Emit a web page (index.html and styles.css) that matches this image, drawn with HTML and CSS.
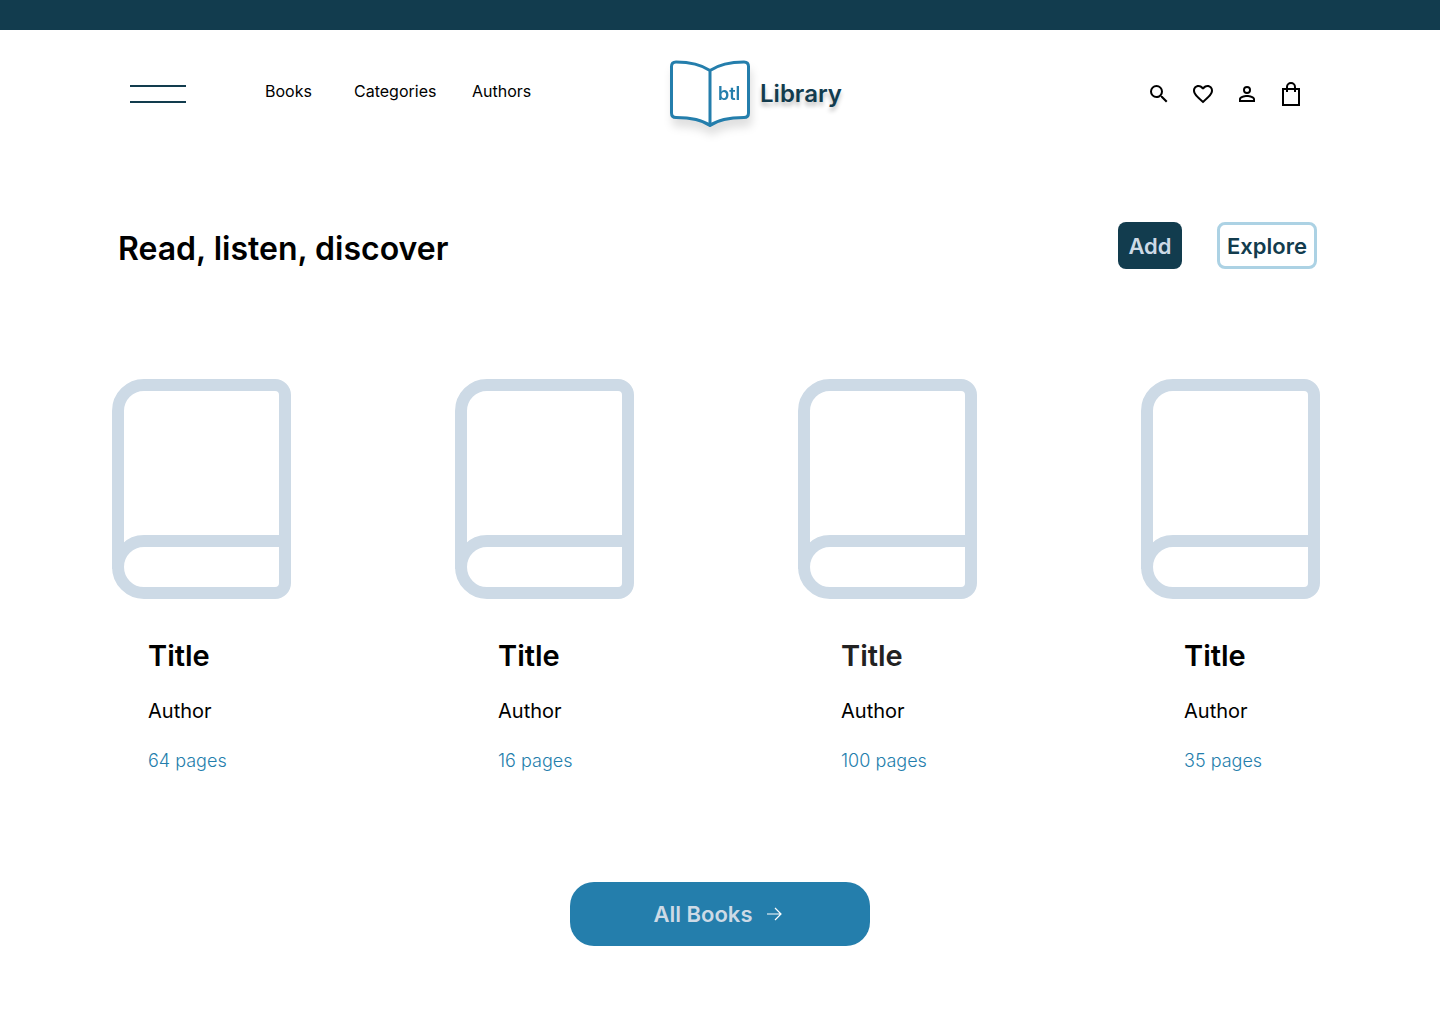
FILE: index.html
```html
<!DOCTYPE html>
<html lang="en">
<head>
  <meta charset="utf-8">
  <meta name="viewport" content="width=device-width, initial-scale=1">
  <title>btl Library</title>
  <link rel="stylesheet" href="styles.css">
</head>
<body>
  <svg class="defs" width="0" height="0" aria-hidden="true">
    <symbol id="book" viewBox="0 0 179 220">
      <path d="M32 162H173M6 188V32A26 26 0 0 1 32 6H163A10 10 0 0 1 173 16V204A10 10 0 0 1 163 214H32A26 26 0 0 1 32 162" fill="none" stroke="currentColor" stroke-width="12"/>
      <path d="M6 184V190" fill="none" stroke="currentColor" stroke-width="12"/>
    </symbol>
  </svg>
  <div class="topbar"></div>
  <header class="header">
    <div class="header-left">
      <button class="menu" type="button" aria-label="Menu"><span></span><span></span></button>
      <nav class="nav">
        <a href="#books">Books</a>
        <a href="#categories">Categories</a>
        <a href="#authors">Authors</a>
      </nav>
    </div>
    <a class="logo" href="#home">
      <svg class="logo-mark" viewBox="0 0 80 68" width="80" height="68">
        <path d="M40 10.500C31 4.500 19 2 6 2Q1.500 2 1.500 6.500V53Q1.500 57.500 6 57.500C20 57.500 31 59 40 65.500C49 59 60 57.500 74 57.500Q78.500 57.500 78.500 53V6.500Q78.500 2 74 2C61 2 49 4.500 40 10.500ZM40 10.500V65.500" fill="#fff" stroke="currentColor" stroke-width="3" stroke-linejoin="round"/>
        <text class="logo-initials" x="48" y="40">btl</text>
      </svg>
      <span class="logo-name">Library</span>
    </a>
    <div class="tools">
      <button type="button" aria-label="Search"><svg viewBox="0 0 24 24"><path d="M15.500 14h-.79l-.28-.27A6.470 6.470 0 0 0 16 9.500 6.500 6.500 0 1 0 9.500 16c1.610 0 3.090-.59 4.230-1.570l.27.28v.79l5 4.990L20.490 19zM9.500 14a4.500 4.500 0 1 1 0-9 4.500 4.500 0 0 1 0 9"/></svg></button>
      <button type="button" aria-label="Favourites"><svg viewBox="0 0 24 24"><path d="M16.500 3c-1.740 0-3.410.81-4.500 2.090C10.910 3.810 9.240 3 7.500 3 4.420 3 2 5.420 2 8.500c0 3.780 3.400 6.860 8.550 11.540L12 21.350l1.450-1.320C18.600 15.360 22 12.280 22 8.500 22 5.420 19.580 3 16.500 3m-4.400 15.550-.1.1-.1-.1C7.140 14.240 4 11.390 4 8.500 4 6.500 5.500 5 7.500 5c1.540 0 3.040.99 3.570 2.360h1.870C13.460 5.990 14.960 5 16.500 5c2 0 3.500 1.500 3.500 3.500 0 2.890-3.140 5.740-7.900 10.050"/></svg></button>
      <button type="button" aria-label="Account"><svg viewBox="0 0 24 24"><path d="M12 5.900a2.100 2.100 0 1 1 0 4.200 2.100 2.100 0 0 1 0-4.200m0 9c2.970 0 6.100 1.460 6.100 2.100v1.100H5.900V17c0-.64 3.130-2.100 6.100-2.100M12 4a4 4 0 1 0 0 8 4 4 0 0 0 0-8m0 9c-2.670 0-8 1.340-8 4v3h16v-3c0-2.660-5.330-4-8-4"/></svg></button>
      <button type="button" aria-label="Bag"><svg viewBox="0 0 24 24"><path d="M4 7H20V23H4ZM8 10V5A4 4 0 0 1 16 5V10" fill="none" stroke="currentColor" stroke-width="2"/></svg></button>
    </div>
  </header>
  <main>
    <section class="intro">
      <h1>Read, listen, discover</h1>
      <div class="actions">
        <button class="btn btn-solid" type="button">Add</button>
        <button class="btn btn-outline" type="button">Explore</button>
      </div>
    </section>
    <section class="books">
      <article class="card">
        <svg class="cover"><use href="#book"/></svg>
        <div class="info"><h2>Title</h2><p class="author">Author</p><p class="pages">64 pages</p></div>
      </article>
      <article class="card">
        <svg class="cover"><use href="#book"/></svg>
        <div class="info"><h2>Title</h2><p class="author">Author</p><p class="pages">16 pages</p></div>
      </article>
      <article class="card card-muted">
        <svg class="cover"><use href="#book"/></svg>
        <div class="info"><h2>Title</h2><p class="author">Author</p><p class="pages">100 pages</p></div>
      </article>
      <article class="card">
        <svg class="cover"><use href="#book"/></svg>
        <div class="info"><h2>Title</h2><p class="author">Author</p><p class="pages">35 pages</p></div>
      </article>
    </section>
    <button class="all-books" type="button">All Books
      <svg viewBox="0 0 16 14" width="16" height="14"><path d="M1 7H15M9 1L15 7L9 13" fill="none" stroke="#fff" stroke-width="1.200"/></svg>
    </button>
  </main>
</body>
</html>
```
FILE: styles.css
```css
:root {
  --navy: #123c4e;
  --blue: #247eac;
  --mist: #cddae6;
  --sky: #acd2e4;
}

* { box-sizing: border-box; }

body {
  margin: 0;
  background: #fff;
  color: #000;
  font-family: Inter, "Liberation Sans", sans-serif;
}

h1, h2, p { margin: 0; }

button {
  padding: 0;
  border: 0;
  background: none;
  color: inherit;
  font: inherit;
  cursor: pointer;
}

a { color: inherit; text-decoration: none; }

.defs { display: block; }

.topbar { height: 30px; background: var(--navy); }

.header {
  display: grid;
  grid-template-columns: 1fr auto 1fr;
  align-items: center;
  padding: 30px 137px 0 130px;
}

.header-left { display: flex; align-items: center; gap: 79px; }

.menu {
  display: flex;
  flex-direction: column;
  gap: 14px;
  width: 56px;
}

.menu span { width: 100%; height: 2px; background: var(--navy); }

.nav {
  display: grid;
  grid-template-columns: 89px 118px auto;
  padding-bottom: 6px;
  font-size: 16px;
  line-height: 20px;
}

.logo {
  display: flex;
  align-items: center;
  gap: 10px;
  padding-left: 79px;
}

.logo-mark {
  overflow: visible;
  color: var(--blue);
  filter: drop-shadow(2px 8px 4px rgba(0, 0, 0, 0.12));
}

.logo-initials {
  fill: var(--blue);
  font-size: 18px;
  font-weight: 600;
}

.logo-name {
  color: var(--navy);
  font-size: 24px;
  font-weight: 600;
  line-height: 30px;
  text-shadow: 0 4px 4px rgba(0, 0, 0, 0.25);
}

.tools { display: flex; justify-content: flex-end; gap: 20px; }
.tools svg { display: block; width: 24px; height: 24px; }

.intro {
  display: flex;
  justify-content: space-between;
  align-items: center;
  padding: 93px 123px 0 118px;
}

.intro h1 {
  padding-top: 7px;
  font-size: 32px;
  font-weight: 600;
  line-height: 42px;
}

.actions { display: flex; align-items: flex-start; gap: 35px; }

.btn {
  height: 47px;
  border-radius: 8px;
  font-size: 22px;
  font-weight: 600;
}

.btn-solid { width: 64px; background: var(--navy); color: var(--mist); }
.btn-outline { width: 100px; border: 3px solid var(--sky); color: var(--navy); }

.books {
  display: flex;
  justify-content: space-between;
  padding: 109px 120px 0 112px;
}

.card { width: 179px; }

.cover { display: block; width: 179px; height: 220px; color: var(--mist); }

.info { padding: 37px 0 0 43px; }
.card:first-child .info { padding-left: 36px; }

.info h2 { font-size: 29px; font-weight: 600; line-height: 40px; }
.card-muted h2 { color: #222; }

.author { padding-top: 20px; font-size: 20px; line-height: 30px; }

.pages {
  padding-top: 20px;
  color: var(--blue);
  font-size: 18px;
  font-weight: 300;
  line-height: 30px;
}

.all-books {
  display: flex;
  justify-content: center;
  align-items: center;
  gap: 14px;
  width: 300px;
  height: 64px;
  margin: 106px auto 78px;
  padding-right: 4px;
  border-radius: 24px;
  background: var(--blue);
  color: var(--mist);
  font-size: 22px;
  font-weight: 600;
}
```
